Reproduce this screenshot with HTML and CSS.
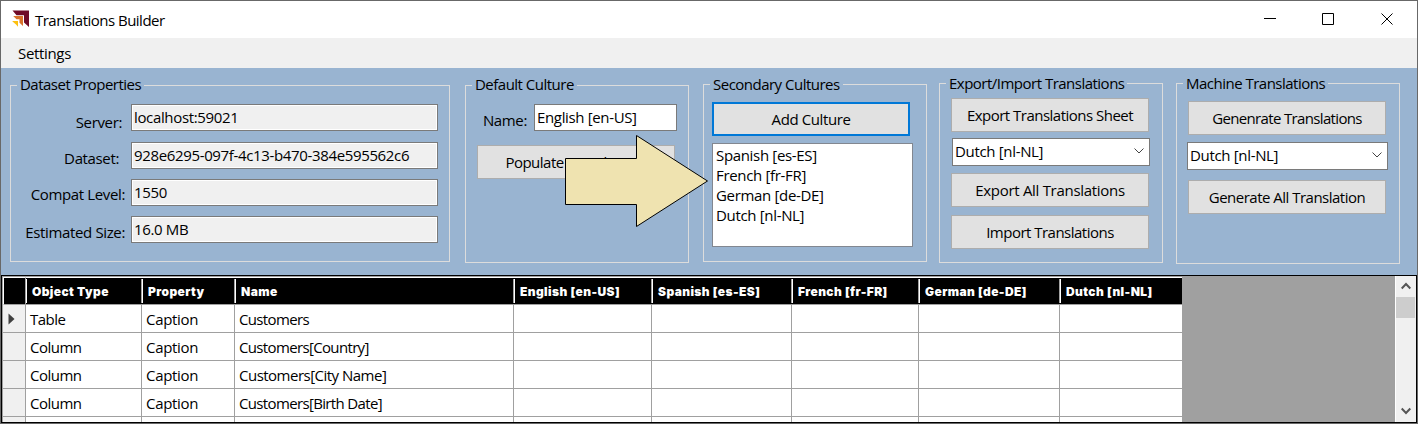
FILE: index.html
```
<!DOCTYPE html>
<html lang="en">
<head>
<meta charset="utf-8">
<title>Translations Builder</title>
<link rel="stylesheet" href="styles.css">
</head>
<body>
<div class="window">
  <header class="titlebar">
    <svg class="logo" width="18" height="18" viewBox="0 0 18 18">
      <path d="M.5 .5H17V17L12 12.5V5.200H4.500Z" fill="#6f0a27"/>
      <path d="M1.200 6H11V16L7.500 12.700V9.200H4.500Z" fill="#d9722a"/>
      <path d="M.5 11H6V16.800L4 14.500L.5 11.500Z" fill="#fdc010"/>
    </svg>
    <h1 class="title">Translations Builder</h1>
    <svg class="controls" width="136" height="14" viewBox="0 0 136 14" fill="none" stroke="#000">
      <path d="M0 5.500H12M58.500 .5H69.500V11.500H58.500Z"/>
      <path d="M117.500 .5L128.500 11.500M128.500 .5L117.500 11.500"/>
    </svg>
  </header>
  <nav class="menu"><span class="menu-item">Settings</span></nav>

  <main class="panel">
    <section class="group dataset">
      <h2 class="legend">Dataset Properties</h2>
      <div class="row"><label class="label server">Server:</label><div class="field readonly">localhost:59021</div></div>
      <div class="row"><label class="label ds">Dataset:</label><div class="field readonly guid">928e6295-097f-4c13-b470-384e595562c6</div></div>
      <div class="row"><label class="label level">Compat Level:</label><div class="field readonly">1550</div></div>
      <div class="row"><label class="label size">Estimated Size:</label><div class="field readonly">16.0 MB</div></div>
    </section>

    <section class="group default">
      <h2 class="legend">Default Culture</h2>
      <div class="row"><label class="label name">Name:</label><div class="field">English [en-US]</div></div>
      <button class="button">Populate Translations</button>
      <svg class="arrow" width="144" height="94" viewBox="0 0 144 94">
        <path d="M1.500 24.500H72.500V1.500L143.500 47L72.500 92.500V70.500H1.500Z" fill="#efe3b0" stroke="#000"/>
      </svg>
    </section>

    <section class="group secondary">
      <h2 class="legend">Secondary Cultures</h2>
      <button class="button focused">Add Culture</button>
      <ul class="list"><li>Spanish [es-ES]</li><li>French [fr-FR]</li><li>German [de-DE]</li><li>Dutch [nl-NL]</li></ul>
    </section>

    <section class="group export">
      <h2 class="legend">Export/Import Translations</h2>
      <button class="button">Export Translations Sheet</button>
      <div class="select">Dutch [nl-NL]<svg width="10" height="6" viewBox="0 0 10 6"><path d="M.5 .5L5 5L9.500 .5" fill="none" stroke="#444"/></svg></div>
      <button class="button loose">Export All Translations</button>
      <button class="button">Import Translations</button>
    </section>

    <section class="group machine">
      <h2 class="legend">Machine Translations</h2>
      <button class="button tight">Genenrate Translations</button>
      <div class="select">Dutch [nl-NL]<svg width="10" height="6" viewBox="0 0 10 6"><path d="M.5 .5L5 5L9.500 .5" fill="none" stroke="#444"/></svg></div>
      <button class="button">Generate All Translation</button>
    </section>
  </main>

  <div class="grid">
    <div class="table">
      <div class="tr head"><b></b><span>Object Type</span><span>Property</span><span>Name</span><span>English [en-US]</span><span>Spanish [es-ES]</span><span>French [fr-FR]</span><span>German [de-DE]</span><span>Dutch [nl-NL]</span></div>
      <div class="tr"><b><svg width="7" height="12" viewBox="0 0 7 12"><path d="M.5 .5L6.500 6L.5 11.500Z" fill="#404040"/></svg></b><span>Table</span><span class="loose">Caption</span><span class="tight">Customers</span><span></span><span></span><span></span><span></span><span></span></div>
      <div class="tr"><b></b><span>Column</span><span class="loose">Caption</span><span class="tight">Customers[Country]</span><span></span><span></span><span></span><span></span><span></span></div>
      <div class="tr"><b></b><span>Column</span><span class="loose">Caption</span><span>Customers[City Name]</span><span></span><span></span><span></span><span></span><span></span></div>
      <div class="tr"><b></b><span>Column</span><span class="loose">Caption</span><span class="tight">Customers[Birth Date]</span><span></span><span></span><span></span><span></span><span></span></div>
      <div class="tr"><b></b><span></span><span></span><span></span><span></span><span></span><span></span><span></span><span></span></div>
    </div>
    <div class="scrollbar">
      <svg width="10" height="8" viewBox="0 0 10 8"><path d="M.7 6.500L5 2L9.300 6.500" fill="none" stroke="#555" stroke-width="2"/></svg>
      <div class="thumb"></div>
      <svg class="down" width="10" height="8" viewBox="0 0 10 8"><path d="M.7 1.500L5 6L9.300 1.500" fill="none" stroke="#555" stroke-width="2"/></svg>
    </div>
  </div>
</div>
</body>
</html>
```
FILE: styles.css
```
* { box-sizing: border-box; }
body {
  margin: 0;
  overflow: hidden;
  font: 15px/20px "Open Sans", "Noto Sans", sans-serif;
  letter-spacing: -0.51px;
  color: #000;
}
h1, h2, ul { margin: 0; padding: 0; font-size: inherit; font-weight: 400; list-style: none; }
.window {
  width: 1418px;
  height: 424px;
  border: 1px solid #686868;
  display: flex;
  flex-direction: column;
  background: #fff;
}
.titlebar { height: 37px; display: flex; align-items: center; padding: 0 17px 0 11px; flex: none; }
.logo { margin-right: 5px; margin-top: -1px; }
.controls { margin-left: auto; }
.menu { height: 30px; flex: none; background: #f0f0f0; padding: 5px 17px; letter-spacing: -0.33px; }

.panel { height: 207px; flex: none; background: #99b4d1; display: flex; align-items: flex-start; padding-left: 9px; }
.group { position: relative; border: 1px solid #dcdcdc; flex: none; width: 224px; white-space: nowrap; }
.legend { width: fit-content; height: 20px; margin: -12px 0 0 6px; padding: 0 3px; background: #99b4d1; }
.dataset { width: 440px; height: 177px; margin: 17px 15px 0 0; }
.default { height: 178px; margin: 17px 14px 0 0; }
.secondary { height: 178px; margin: 16px 12px 0 0; }
.export { height: 180px; margin: 15px 13px 0 0; }
.machine { height: 181px; margin: 15px 0 0; }
.export .legend, .machine .legend, .secondary .legend { margin-top: -11px; }

.row { display: flex; }
.dataset .row { height: 27px; margin-bottom: 10px; }
.dataset .legend { margin-bottom: 10px; }
.dataset .row:nth-child(2) { margin-bottom: 11px; }
.label { width: 120px; padding: 8px 6px 0 0; text-align: right; letter-spacing: -0.36px; }
.server { padding-right: 9px; }
.ds { padding: 6px 12px 0 0; }
.level { padding-top: 5px; }
.size { padding-top: 6px; }
.field { width: 307px; height: 27px; border: 1px solid #7a7a7a; background: #fff; padding: 2px 2px; letter-spacing: -0.35px; }
.readonly { background: #f0f0f0; box-shadow: inset 0 0 0 1px #fff; }
.default .row { margin: 10px 0 14px; }
.name { width: 68px; padding: 6px 7px 0 0; }
.default .field { width: 143px; }

.button {
  display: block;
  width: 198px;
  height: 34px;
  margin-left: 11px;
  padding: 0;
  border: 1px solid #adadad;
  background: #e1e1e1;
  font: inherit;
  letter-spacing: inherit;
  color: #000;
  text-align: center;
}
.focused { border: 2px solid #0078d7; margin: 8px 0 7px 8px; letter-spacing: -0.4px; }
.list { width: 201px; height: 104px; margin-left: 8px; border: 1px solid #828790; background: #fff; padding: 1px 3px; letter-spacing: -0.33px; }
.select { display: flex; justify-content: space-between; align-items: center; width: 198px; height: 28px; border: 1px solid #7a7a7a; background: #fff; padding: 0 5px 2px 2px; letter-spacing: -0.33px; }
.export .button:nth-child(2) { margin-top: 5px; }
.export .select { margin: 6px 0 7px 12px; }
.export .button:nth-child(4) { margin-bottom: 8px; }
.machine .button:nth-child(2) { margin-top: 8px; }
.machine .select { width: 201px; margin: 7px 0 10px 10px; }
.arrow { position: absolute; z-index: 2; left: 98px; top: 48px; }
.loose { letter-spacing: -0.3px; }
.tight { letter-spacing: -0.65px; }

.grid { height: 148px; border: 1px solid #000; background: #a0a0a0; display: flex; justify-content: space-between; overflow: hidden; }
.table { margin-top: 1px; padding-left: 1px; width: 1180px; }
.tr { display: grid; grid-template-columns: 23px 116px 93px 279px 138px 140px 127px 141px 122px; height: 28px; }
.tr > * { border-right: 1px solid #a0a0a0; border-bottom: 1px solid #a0a0a0; background: #fff; padding: 4px 0 0 4px; white-space: nowrap; }
.tr > :last-child { border-right: 0; }
.tr > b { background: #f0f0f0; padding: 8px 0 0 5px; line-height: 0; }
.head > *, .head > b { background: #000; border-top: 1px solid #fff; color: #fff; }
.head > span { position: relative; border-right: 0; padding: 4px 0 0 6px; font: 900 12px/20px Inter, "Liberation Sans", sans-serif; letter-spacing: .4px; }
.head > span::before { content: ""; position: absolute; left: -1px; top: 1px; width: 2px; height: 24px; background: linear-gradient(90deg, #a0a0a0 50%, #fff 50%); }
.head > b { border-left: 1px solid #fff; }
.scrollbar { width: 21px; border-left: 1px solid #fff; background: #f0f0f0; display: flex; flex-direction: column; align-items: center; padding: 6px 1px 7px 0; }
.thumb { width: 19px; height: 21px; margin-top: 7px; background: #cdcdcd; }
.down { margin-top: auto; }
```
